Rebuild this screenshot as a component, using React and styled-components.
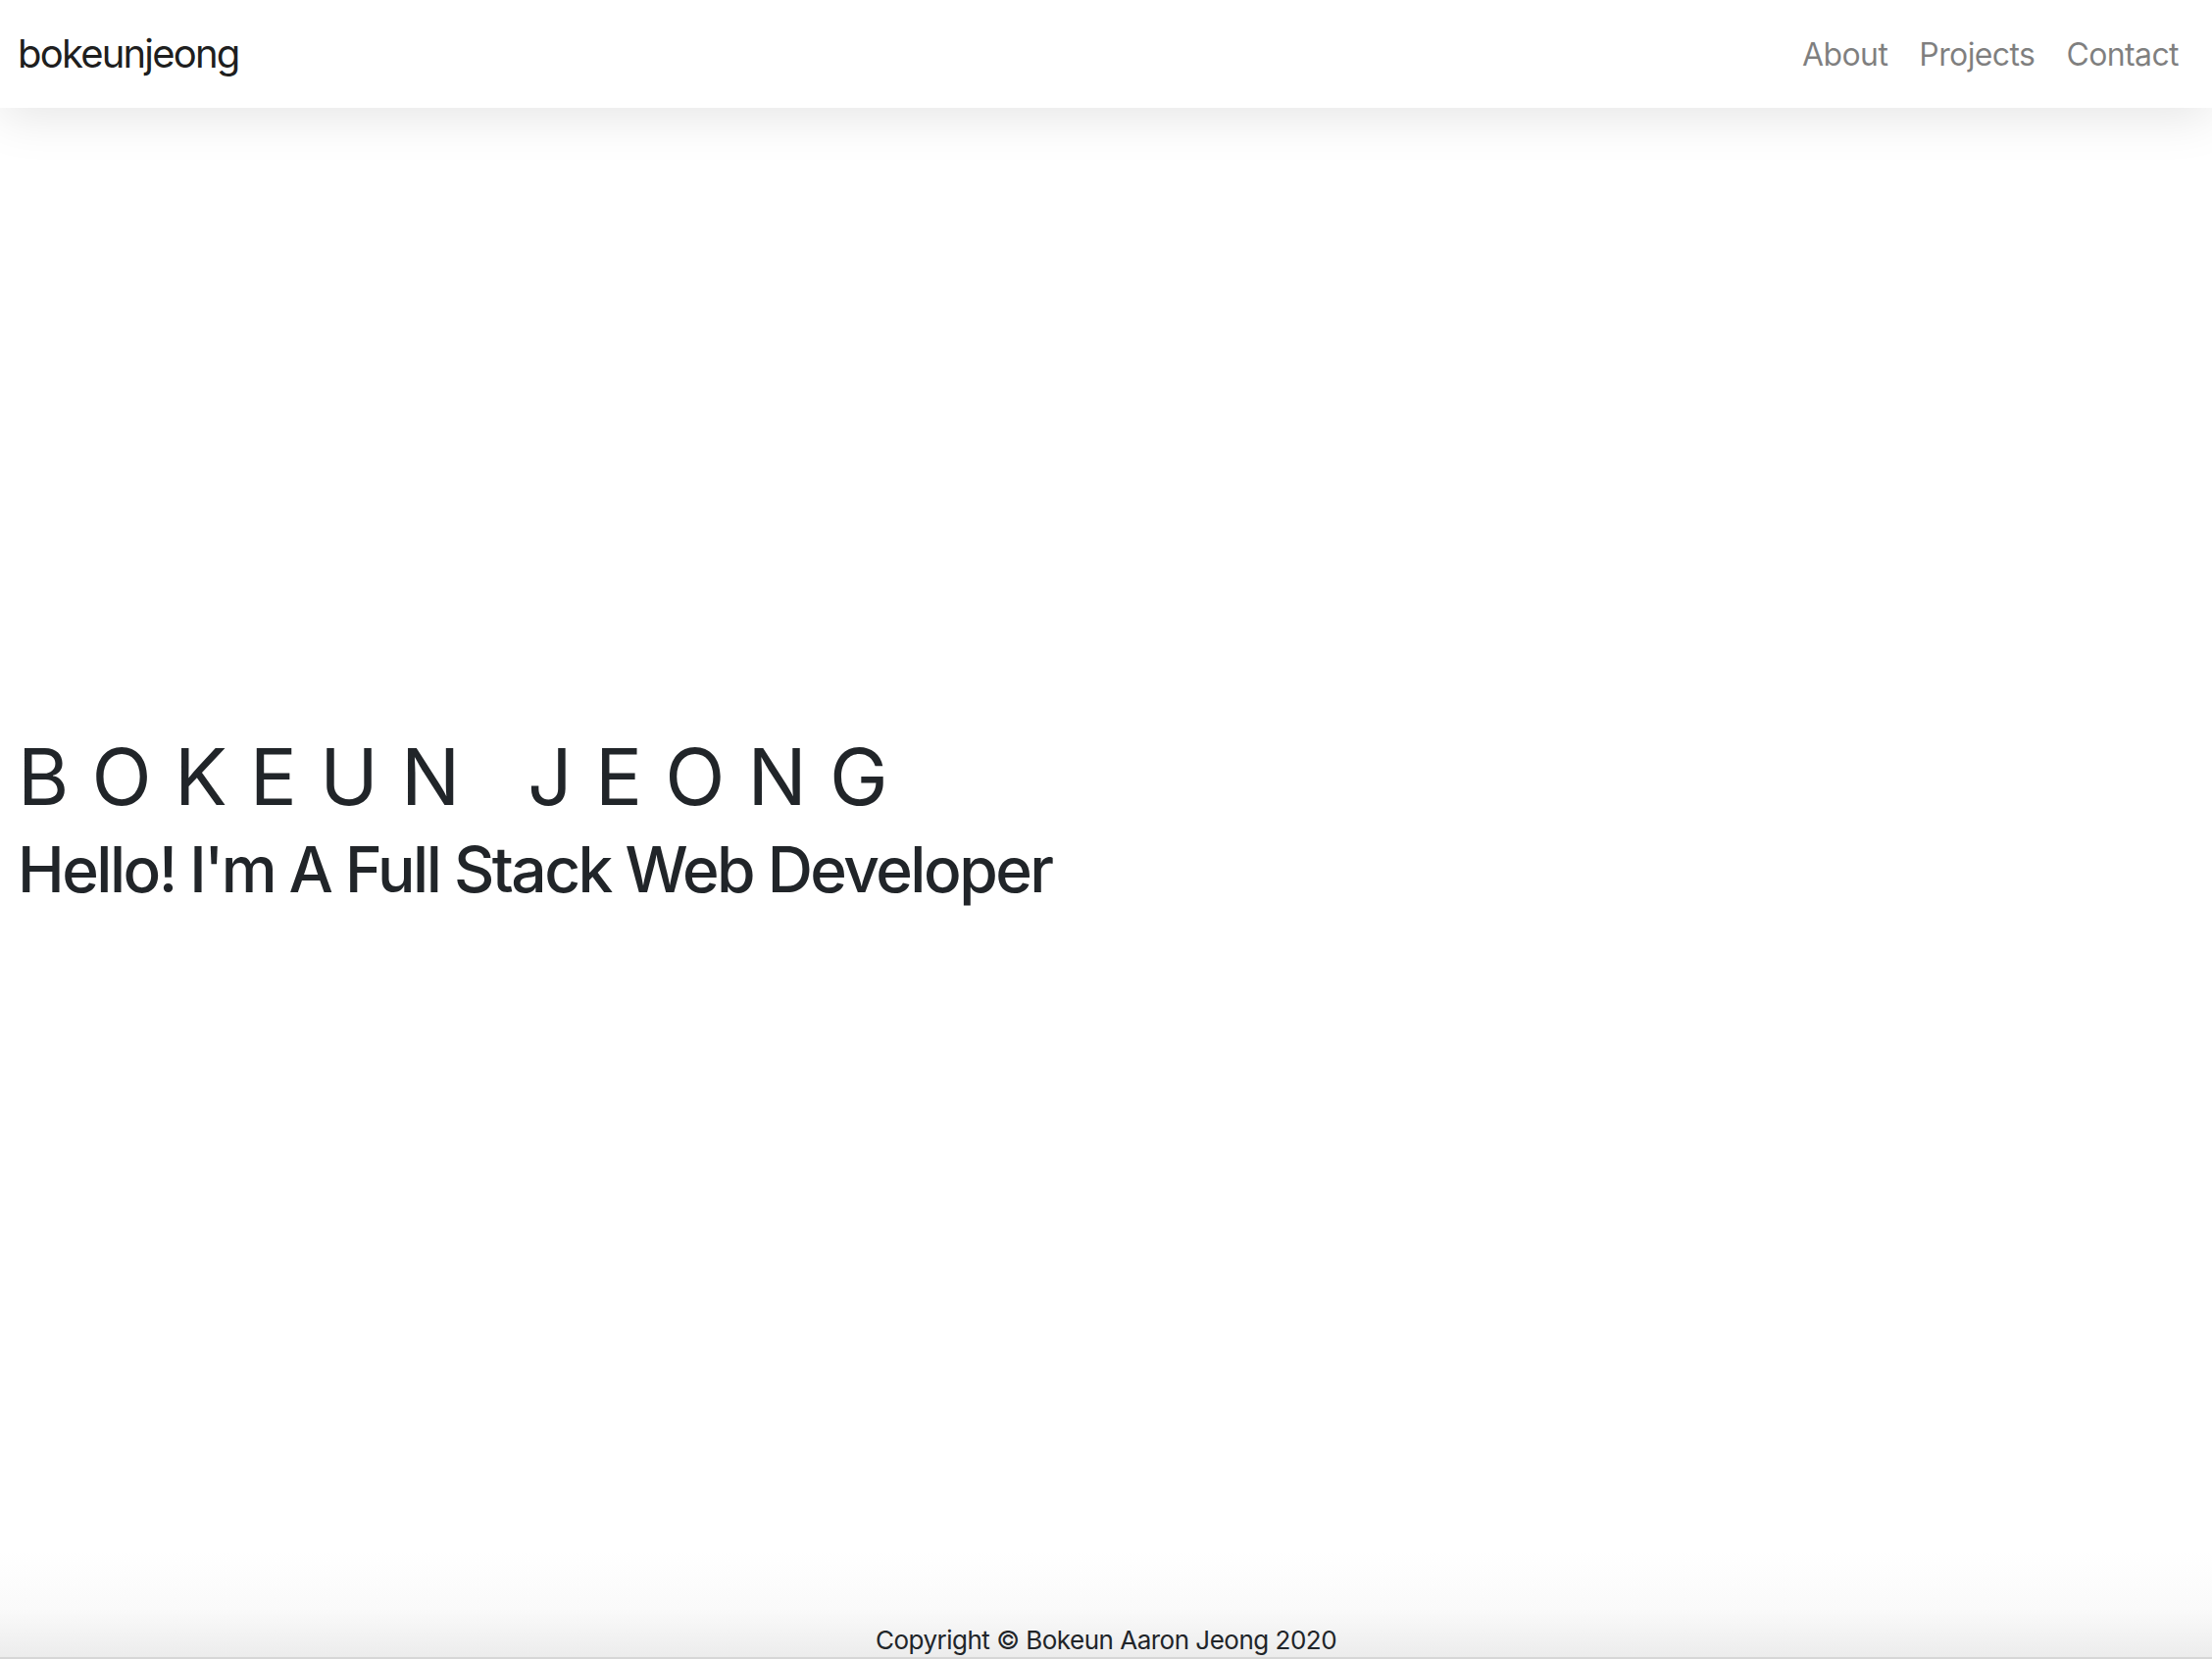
import React from "react";
import styled, { createGlobalStyle } from "styled-components";

const Global = createGlobalStyle`
  html, body { margin: 0; padding: 0; background: #fff; }
  body { font-family: Inter, "Liberation Sans", Arial, sans-serif; color: #212529; }
  * { box-sizing: border-box; }
`;

const Page = styled.div`
  min-height: 1692px;
  height: 1692px;
  display: flex;
  flex-direction: column;
  overflow: hidden;
`;

const Navbar = styled.nav`
  height: 110px;
  flex: 0 0 110px;
  display: flex;
  align-items: center;
  justify-content: space-between;
  padding: 0 18px 0 18px;
  background: #fff;
  box-shadow: 0 10px 50px rgba(0, 0, 0, 0.1);
  position: relative;
  z-index: 2;
`;

const Brand = styled.a`
  font-size: 40px;
  color: rgba(0, 0, 0, 0.9);
  text-decoration: none;
  letter-spacing: -1.8px;
  margin-top: -2px;
`;

const NavList = styled.ul`
  display: flex;
  list-style: none;
  margin: 0;
  padding: 0;
`;

const NavLink = styled.a`
  display: block;
  padding: 0 16px;
  font-size: 32px;
  color: rgba(0, 0, 0, 0.5);
  text-decoration: none;
  letter-spacing: -0.6px;
`;

const Main = styled.main`
  flex: 1;
  display: flex;
  flex-direction: column;
  justify-content: center;
  padding: 0 0 28px 18px;
`;

const Title = styled.h1`
  margin: 0;
  font-size: 80px;
  font-weight: 400;
  line-height: 110px;
  letter-spacing: 0.29em;
  color: #212529;
`;

const Subtitle = styled.h2`
  margin: 0;
  font-size: 64px;
  font-weight: 500;
  line-height: 80px;
  letter-spacing: -2.5px;
  color: #212529;
`;

const Footer = styled.footer`
  flex: 0 0 110px;
  display: flex;
  align-items: flex-end;
  justify-content: center;
  background: linear-gradient(to bottom, #ffffff 0%, #fafafa 55%, #ececec 100%);
  border-bottom: 2px solid #d6d6d6;
`;

const Copy = styled.p`
  margin: 0 0 -3px 0;
  font-size: 26px;
  line-height: 40px;
  letter-spacing: -0.5px;
  color: #212529;
`;

export default function App() {
  return (
    <>
      <Global />
      <Page>
        <Navbar>
          <Brand href="#">bokeunjeong</Brand>
          <NavList>
            <li><NavLink href="#about">About</NavLink></li>
            <li><NavLink href="#projects">Projects</NavLink></li>
            <li><NavLink href="#contact">Contact</NavLink></li>
          </NavList>
        </Navbar>
        <Main>
          <Title>BOKEUN JEONG</Title>
          <Subtitle>Hello! I'm A Full Stack Web Developer</Subtitle>
        </Main>
        <Footer>
          <Copy>Copyright © Bokeun Aaron Jeong 2020</Copy>
        </Footer>
      </Page>
    </>
  );
}
